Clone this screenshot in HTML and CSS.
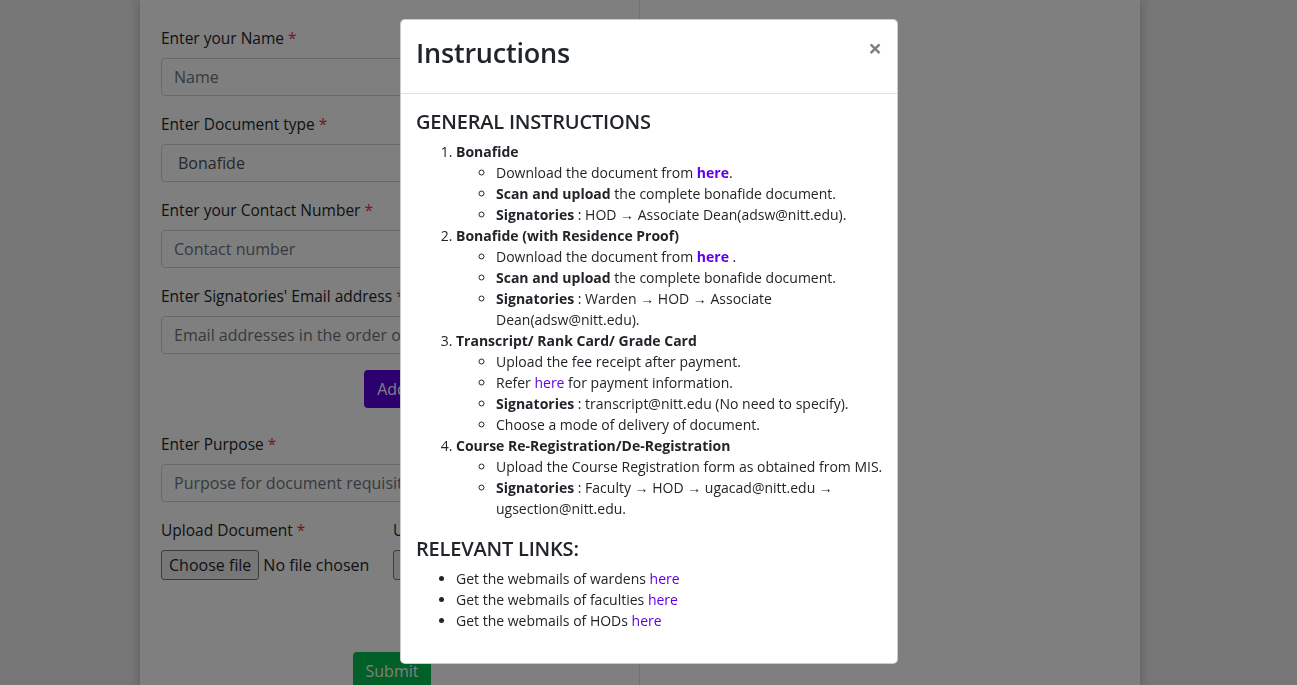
FILE: index.html
```html
<!DOCTYPE html>
<html lang="en">
<head>
<meta charset="utf-8">
<title>Document Requisition</title>
<link rel="stylesheet" href="styles.css">
</head>
<body>
<div class="page">
  <div class="form-col">
    <div class="group">
      <label class="lbl">Enter your Name <span class="req">*</span></label>
      <div class="input ph">Name</div>
    </div>
    <div class="group">
      <label class="lbl">Enter Document type <span class="req">*</span></label>
      <div class="input select">Bonafide</div>
    </div>
    <div class="group">
      <label class="lbl">Enter your Contact Number <span class="req">*</span></label>
      <div class="input ph">Contact number</div>
    </div>
    <div class="group">
      <label class="lbl">Enter Signatories' Email address <span class="req">*</span></label>
      <div class="input ph">Email addresses in the order of signing</div>
    </div>
    <div class="center-row"><button class="btn btn-add">Add</button></div>
    <div class="group">
      <label class="lbl">Enter Purpose <span class="req">*</span></label>
      <div class="input ph">Purpose for document requisition</div>
    </div>
    <div class="upload-row">
      <div class="upload">
        <label class="lbl">Upload Document <span class="req">*</span></label>
        <div class="file"><span class="file-btn">Choose file</span><span class="file-name">No file chosen</span></div>
      </div>
      <div class="upload">
        <label class="lbl">Upload Receipt</label>
        <div class="file"><span class="file-btn">Choose file</span><span class="file-name">No file chosen</span></div>
      </div>
    </div>
    <div class="center-row submit-row"><button class="btn btn-submit">Submit</button></div>
  </div>
  <div class="side-col"></div>
</div>

<div class="backdrop"></div>

<div class="modal">
  <div class="modal-header">
    <h3 class="modal-title">Instructions</h3>
    <span class="close">&times;</span>
  </div>
  <div class="modal-body">
    <h5 class="sec">GENERAL INSTRUCTIONS</h5>
    <ol class="olist">
      <li><b>Bonafide</b>
        <ul class="clist">
          <li>Download the document from <a class="lnk strong">here</a>.</li>
          <li><b>Scan and upload</b> the complete bonafide document.</li>
          <li><b>Signatories</b> : HOD &rarr; Associate Dean(adsw@nitt.edu).</li>
        </ul>
      </li>
      <li><b>Bonafide (with Residence Proof)</b>
        <ul class="clist">
          <li>Download the document from <a class="lnk strong">here</a> .</li>
          <li><b>Scan and upload</b> the complete bonafide document.</li>
          <li><b>Signatories</b> : Warden &rarr; HOD &rarr; Associate Dean(adsw@nitt.edu).</li>
        </ul>
      </li>
      <li><b>Transcript/ Rank Card/ Grade Card</b>
        <ul class="clist">
          <li>Upload the fee receipt after payment.</li>
          <li>Refer <a class="lnk">here</a> for payment information.</li>
          <li><b>Signatories</b> : transcript@nitt.edu (No need to specify).</li>
          <li>Choose a mode of delivery of document.</li>
        </ul>
      </li>
      <li><b>Course Re-Registration/De-Registration</b>
        <ul class="clist">
          <li class="nowrap">Upload the Course Registration form as obtained from MIS.</li>
          <li><b>Signatories</b> : Faculty &rarr; HOD &rarr; ugacad@nitt.edu &rarr; ugsection@nitt.edu.</li>
        </ul>
      </li>
    </ol>
    <h5 class="sec">RELEVANT LINKS:</h5>
    <ul class="dlist">
      <li>Get the webmails of wardens <a class="lnk">here</a></li>
      <li>Get the webmails of faculties <a class="lnk">here</a></li>
      <li>Get the webmails of HODs <a class="lnk">here</a></li>
    </ul>
  </div>
</div>
</body>
</html>
```

FILE: styles.css
```css
* { box-sizing: border-box; }
html, body { margin: 0; padding: 0; }
body {
  background: #efefef;
  font-family: "Open Sans", "Noto Sans", sans-serif;
  color: #212529;
  font-size: 16px;
  line-height: 1.5;
  height: 685px;
  overflow: hidden;
  padding-right: 17px;
}
.page {
  width: 1000px;
  margin: 0 auto;
  background: #fff;
  min-height: 700px;
  display: flex;
  box-shadow: 0 0 12px rgba(0,0,0,0.25);
}
.form-col {
  width: 500px;
  padding: 26px 16px 0 21px;
  border-right: 1px solid #dee2e6;
}
.side-col { flex: 1; }
.group { margin-bottom: 16px; }
.lbl { display: block; margin-bottom: 8px; font-size: 15.5px; line-height: 24px; white-space: nowrap; }
.req { color: #dc3545; }
.input {
  height: 38px;
  border: 1px solid #ced4da;
  border-radius: 4px;
  padding: 6px 12px;
  font-size: 16px;
  line-height: 24px;
  white-space: nowrap;
  overflow: hidden;
}
.ph { color: #6c757d; }
.select { padding-left: 16px; color: #495057; }
.center-row { display: flex; justify-content: center; }
.btn {
  height: 38px;
  border: 1px solid transparent;
  border-radius: 4px;
  padding: 6px 12px;
  font: inherit;
  font-size: 16px;
  line-height: 24px;
  color: #fff;
}
.btn-add { background: #5a00e0; margin: 0 0 24px; }
.upload-row { display: grid; grid-template-columns: 1fr 1fr; column-gap: 2px; }
.file { display: flex; align-items: center; height: 30px; white-space: nowrap; }
.file-btn {
  height: 30px;
  border: 1px solid #767676;
  border-radius: 3px;
  background: #efefef;
  padding: 0 7px;
  line-height: 28px;
  font-size: 16px;
}
.file-name { padding-left: 4px; font-size: 16px; }
.submit-row { margin-top: 72px; }
.btn-submit { background: #00c04e; }

.backdrop {
  position: fixed;
  inset: 0;
  background: rgba(0,0,0,0.5);
}
.modal {
  position: fixed;
  top: 19px;
  left: 400px;
  width: 498px;
  background: #fff;
  border: 1px solid rgba(0,0,0,0.2);
  border-radius: 5px;
}
.modal-header {
  display: flex;
  align-items: flex-start;
  padding: 12px 15px 20px 15px;
  border-bottom: 1px solid #dee2e6;
  height: 74px;
}
.modal-title {
  margin: 0;
  font-size: 27px;
  font-weight: 600;
  line-height: 42px;
  flex: 1;
  letter-spacing: -0.2px;
}
.close {
  font-size: 24px;
  font-weight: 700;
  line-height: 1;
  color: #000;
  opacity: 0.5;
  margin: 4px 0 0 0;
}
.modal-body {
  padding: 16px 15px;
  font-size: 14px;
  line-height: 21px;
}
.sec {
  margin: 0 0 7px;
  font-size: 20px;
  font-weight: 600;
  line-height: 24px;
  letter-spacing: -0.2px;
}
.olist { margin: 0 0 18px; padding-left: 40px; }
.clist { margin: 0; padding-left: 40px; list-style: circle; }
.dlist { margin: 0 0 16px; padding-left: 40px; list-style: disc; }
b { font-weight: 700; }
.lnk { color: #6200ee; text-decoration: none; }
.strong { font-weight: 700; }
.nowrap { white-space: nowrap; }
```
